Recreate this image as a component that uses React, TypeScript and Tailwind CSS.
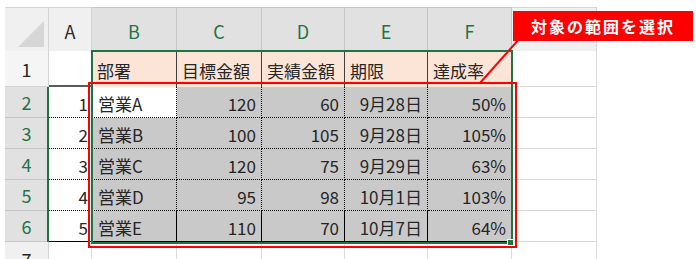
import React from "react";

const rows = [
  { n: 1, dept: "営業A", target: 120, actual: 60, date: "9月28日", rate: "50%" },
  { n: 2, dept: "営業B", target: 100, actual: 105, date: "9月28日", rate: "105%" },
  { n: 3, dept: "営業C", target: 120, actual: 75, date: "9月29日", rate: "63%" },
  { n: 4, dept: "営業D", target: 95, actual: 98, date: "10月1日", rate: "103%" },
  { n: 5, dept: "営業E", target: 110, actual: 70, date: "10月7日", rate: "64%" },
];

const headers = ["部署", "目標金額", "実績金額", "期限", "達成率"];
const letters = ["A", "B", "C", "D", "E", "F", "G"];

const font = { fontFamily: '"Noto Sans CJK JP", "Noto Sans", sans-serif' };

export default function App() {
  return (
    <div
      className="relative h-[259px] w-[696px] overflow-hidden bg-white text-[17px] leading-none text-[#262626]"
      style={font}
    >
      <div className="ml-[5px] mt-[7px] grid w-[592px] grid-cols-[44px_43px_85px_85px_83px_83px_84px_85px] grid-rows-[44px_36px_31px_31px_31px_31px_31px_31px]">
        {/* column headers */}
        <div className="relative border-r border-t border-[#d4d4d4] bg-[#f0f0f0]">
          <svg className="absolute bottom-[4px] right-[4px]" width="26" height="26" viewBox="0 0 26 26">
            <polygon points="26,0 26,26 0,26" fill="#d6d6d6" />
          </svg>
        </div>
        {letters.map((l) => {
          const sel = l !== "A" && l !== "G";
          return (
            <div
              key={l}
              className={
                sel
                  ? "flex items-center justify-center border-r border-t border-[#c6c6c6] bg-[#e1e1e1] pt-[2px] text-[18px] text-[#217346]"
                  : "flex items-center justify-center border-r border-t border-[#d4d4d4] bg-[#f0f0f0] pt-[2px] text-[18px] text-[#262626]"
              }
            >
              {/* G is hidden behind the callout */}
              {l === "G" ? null : l}
            </div>
          );
        })}

        {/* row 1 */}
        <div className="flex items-center justify-center border-b border-r border-[#d4d4d4] bg-[#f5f5f5] text-[18px]">
          1
        </div>
        <div className="border-b-2 border-r border-b-[#595959] border-r-[#d4d4d4]" />
        {headers.map((h) => (
          <div
            key={h}
            className="flex items-center border-r border-[#404040] bg-[#fce4d6] pl-[5px] pt-[3px]"
          >
            {h}
          </div>
        ))}
        <div className="border-b border-r border-[#d9d9d9]" />

        {/* rows 2-6 */}
        {rows.map((r, i) => {
          const last = i === rows.length - 1;
          const rowLine = last
            ? "border-b border-solid border-b-black"
            : "border-b border-dotted border-b-black";
          const cell = `flex items-center justify-end border-r border-r-black bg-[#c9c9c9] pr-[5px] pt-[2px] ${rowLine}`;
          return (
            <React.Fragment key={r.n}>
              <div className="flex items-center justify-center border-b border-r border-[#c6c6c6] bg-[#e1e1e1] text-[18px] text-[#217346]">
                {i + 2}
              </div>
              <div className={`flex items-center justify-end pr-[4px] pt-[2px] ${rowLine}`}>{r.n}</div>
              <div
                className={`flex items-center border-r border-r-black pl-[6px] pt-[2px] ${rowLine} ${
                  i === 0 ? "bg-white" : "bg-[#c9c9c9]"
                }`}
              >
                {r.dept}
              </div>
              <div className={cell}>{r.target}</div>
              <div className={cell}>{r.actual}</div>
              <div className={cell}>{r.date}</div>
              <div className={cell}>{r.rate}</div>
              <div className="border-b border-r border-[#d9d9d9]" />
            </React.Fragment>
          );
        })}

        {/* row 7 */}
        <div className="flex items-start justify-center border-r border-[#d4d4d4] bg-[#f0f0f0] pt-[8px] text-[18px]">
          7
        </div>
        {letters.map((l) => (
          <div key={l} className="border-r border-[#d9d9d9]" />
        ))}
      </div>

      {/* selected row headers edge */}
      <div className="absolute left-[47px] top-[87px] h-[155px] w-[2px] bg-[#217346]" />

      {/* selection outline */}
      <div className="absolute left-[91px] top-[50px] h-[194px] w-[422px] border-2 border-[#217346]" />
      <div className="absolute left-[507px] top-[239px] h-[7px] w-[7px] border border-white bg-[#217346]" />

      {/* red frame */}
      <div className="absolute left-[88px] top-[82px] h-[166px] w-[429px] border-2 border-[#ff0000]" />

      {/* callout line */}
      <svg className="absolute left-[476px] top-[36px]" width="48" height="50" viewBox="0 0 48 50">
        <line x1="44" y1="2" x2="4" y2="47" stroke="#ff0000" strokeWidth="2" />
      </svg>

      {/* callout label */}
      <div className="absolute left-[513px] top-[11px] flex h-[30px] w-[180px] items-center justify-center bg-[#ff0000] text-[16px] font-bold tracking-[2px] text-white">
        対象の範囲を選択
      </div>
    </div>
  );
}
